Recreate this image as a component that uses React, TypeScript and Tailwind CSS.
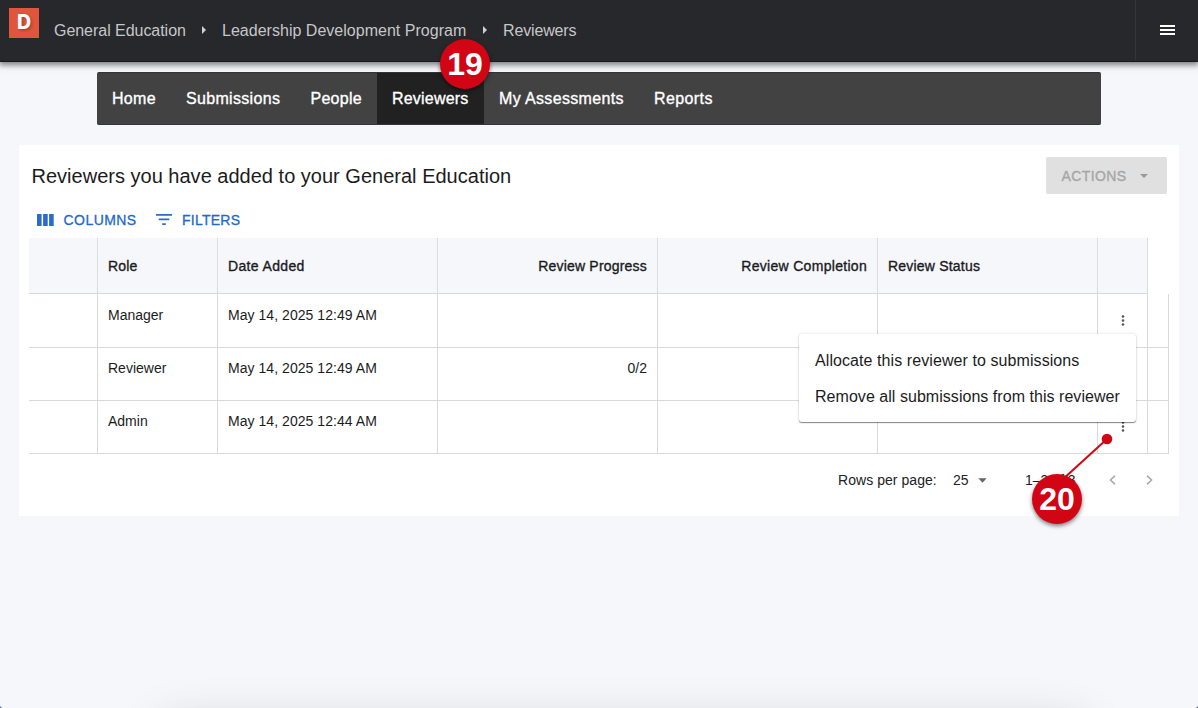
const navItems = [
  { label: 'Home', box: 'w-[74px]', text: 'tracking-[0.3px]' },
  { label: 'Submissions', box: 'w-[124.5px]', text: 'tracking-[0.32px]' },
  { label: 'People', box: 'w-[81.5px]', text: 'tracking-[0.27px]' },
  { label: 'Reviewers', box: 'w-[107px]', text: 'tracking-[0.2px]', active: true },
  { label: 'My Assessments', box: 'w-[155px]', text: 'tracking-[0.35px]' },
  { label: 'Reports', box: 'w-[89px]', text: 'tracking-[0.4px]' },
]

const rows = [
  { role: 'Manager', date: 'May 14, 2025 12:49 AM', progress: '' },
  { role: 'Reviewer', date: 'May 14, 2025 12:49 AM', progress: '0/2' },
  { role: 'Admin', date: 'May 14, 2025 12:44 AM', progress: '' },
]

const medium = '[-webkit-text-stroke:0.35px_currentColor]'

function Crumb({ label, className }: { label: string; className: string }) {
  return <span className={`whitespace-nowrap ${className}`}>{label}</span>
}

function CrumbArrow() {
  return (
    <svg className="-mt-px mr-4 ml-4 shrink-0" width="4" height="8" viewBox="0 0 4 8">
      <path d="M0 0L4 4L0 8Z" fill="#d0d0d1" />
    </svg>
  )
}

function Header() {
  return (
    <header className="relative flex h-[62px] shrink-0 border-b border-[#1a1820] bg-[#27282c] shadow-[0_2px_6px_1px_rgba(0,0,0,0.5)]">
      <div className="mt-2 ml-[9px] flex h-[30px] w-[30px] shrink-0 items-center justify-center overflow-hidden bg-[#e2553c]">
        <span className="font-['Inter',sans-serif] text-[19.5px] leading-none font-extrabold text-white [text-shadow:1px_1px_2px_#bd4834,2px_2px_2px_#bd4834]">
          D
        </span>
      </div>
      <nav className="ml-[15px] flex h-[60px] items-center pt-px text-base text-[#c6c6c8]">
        <Crumb label="General Education" className="w-[132px] tracking-[-0.04px]" />
        <CrumbArrow />
        <Crumb label="Leadership Development Program" className="w-[245px] tracking-[0.02px]" />
        <CrumbArrow />
        <Crumb label="Reviewers" className="tracking-[-0.15px]" />
      </nav>
      <div className="ml-auto flex h-[60px] w-[63px] items-center border-l border-[#34353a] pl-6">
        <div className="flex w-[15px] flex-col gap-[2px]">
          <span className="h-[2px] bg-white" />
          <span className="h-[2px] bg-white" />
          <span className="h-[2px] bg-white" />
        </div>
      </div>
    </header>
  )
}

function MainNav() {
  return (
    <nav className="mx-[97px] mt-[10px] flex h-[53px] w-[1004px] shrink-0 overflow-hidden rounded-[2px] border-y border-[#353535] bg-[#424242]">
      {navItems.map((item) => (
        <a
          key={item.label}
          className={`flex shrink-0 items-center pl-[15px] text-base whitespace-nowrap text-white ${medium} ${item.box} ${item.text} ${
            item.active ? 'bg-[#212121]' : ''
          }`}
        >
          {item.label}
        </a>
      ))}
    </nav>
  )
}

function Toolbar() {
  return (
    <div className="mt-2 mb-[2px] flex h-8 items-center pl-[18px] text-sm text-[#1f69c8]">
      <svg width="17" height="12" viewBox="0 0 17 12" fill="#2a6bcb">
        <path d="M0 0h4.6v12H0zM6.1 0h4.6v12H6.1zM12.1 0h4.6v12h-4.6z" />
      </svg>
      <span className="-mt-px ml-[9.5px] w-[92.5px] tracking-[0.45px] whitespace-nowrap [-webkit-text-stroke:0.3px_currentColor]">
        COLUMNS
      </span>
      <svg className="-mt-px" width="16" height="11" viewBox="0 0 16 11" fill="#2a6bcb">
        <path d="M0 0h16v1.7H0zM2.7 4.6h10.6v1.7H2.7zM6.2 9.2h3.6v1.7H6.2z" />
      </svg>
      <span className="-mt-px ml-[10px] tracking-[0.25px] whitespace-nowrap [-webkit-text-stroke:0.3px_currentColor]">
        FILTERS
      </span>
    </div>
  )
}

function MoreIcon() {
  return (
    <svg width="4" height="11" viewBox="0 0 4 11" fill="#555">
      <circle cx="2" cy="1.5" r="1.3" />
      <circle cx="2" cy="5.5" r="1.3" />
      <circle cx="2" cy="9.5" r="1.3" />
    </svg>
  )
}

function ReviewersTable() {
  const head = 'flex items-center border-r border-[#dcdddf] px-[10px]'
  const cell = 'border-r border-[#d9d9d9] px-[10px] leading-5 whitespace-nowrap'

  return (
    <div className="ml-[10px] text-sm text-[#1c1c1c]">
      <div
        className={`grid h-14 w-[1119px] grid-cols-[69px_120px_220px_220px_220px_220px_50px] border-b border-[#d9d9d9] bg-[#f5f7fb] tracking-[0.2px] ${medium}`}
      >
        <div className={head} />
        <div className={head}>Role</div>
        <div className={`${head} tracking-[0.35px]`}>Date Added</div>
        <div className={`${head} justify-end`}>Review Progress</div>
        <div className={`${head} justify-end tracking-[0.3px]`}>Review Completion</div>
        <div className={head}>Review Status</div>
        <div className={head} />
      </div>
      {rows.map((row, i) => (
        <div
          key={row.role}
          className={`grid w-[1140px] grid-cols-[69px_120px_220px_220px_220px_220px_50px_21px] border-b border-[#d9d9d9] *:pt-[10px] ${
            i === 0 ? 'h-[54px] *:pt-[11px]' : 'h-[53px]'
          }`}
        >
          <div className={cell} />
          <div className={cell}>{row.role}</div>
          <div className={`${cell} tracking-[0.05px]`}>{row.date}</div>
          <div className={`${cell} text-right`}>{row.progress}</div>
          <div className={cell} />
          <div className={cell} />
          <div className="flex justify-center border-r border-[#d9d9d9]">
            <div className="mt-[10px]">
              <MoreIcon />
            </div>
          </div>
          <div className="border-r border-[#d9d9d9]" />
        </div>
      ))}
    </div>
  )
}

function Pagination() {
  return (
    <div className="flex h-[51px] items-center pl-[819px] text-sm whitespace-nowrap text-[#222]">
      <span className="w-[115px] tracking-[0.05px]">Rows per page:</span>
      <span className="w-[25px]">25</span>
      <svg className="mt-px mr-[38px]" width="9" height="5" viewBox="0 0 9 5">
        <path d="M0.3 0.3H8.7L4.5 4.7Z" fill="#666" />
      </svg>
      <span className="w-[84px]">1–3 of 3</span>
      <svg width="7" height="10" viewBox="0 0 7 10" fill="none" stroke="#aaa" strokeWidth="1.6">
        <path d="M6 0.7L1.5 5L6 9.3" />
      </svg>
      <svg className="ml-[29.5px]" width="7" height="10" viewBox="0 0 7 10" fill="none" stroke="#aaa" strokeWidth="1.6">
        <path d="M1 0.7L5.5 5L1 9.3" />
      </svg>
    </div>
  )
}

function RowMenu() {
  return (
    <div className="absolute top-[334px] left-[799px] h-[88px] w-[337px] rounded-[3px] bg-white pt-[9px] pl-4 text-base text-[#1c1c1c] shadow-[0_1px_1px_rgba(0,0,0,0.45),0_0_3px_rgba(0,0,0,0.14)]">
      <div className="flex h-9 items-center tracking-[0.08px] whitespace-nowrap">Allocate this reviewer to submissions</div>
      <div className="flex h-9 items-center tracking-[0.04px] whitespace-nowrap">Remove all submissions from this reviewer</div>
    </div>
  )
}

function Marker({ value, className }: { value: string; className: string }) {
  return (
    <div
      className={`absolute flex h-[50px] w-[50px] items-center justify-center rounded-full bg-[#d20515] text-[32px] leading-none font-bold text-white shadow-[0_2px_4px_rgba(0,0,0,0.5)] ${className}`}
    >
      {value}
    </div>
  )
}

export default function App() {
  return (
    <div className="h-[708px] w-[1198px] bg-[#3f5580]">
      <div className="relative flex h-full flex-col overflow-hidden rounded-b-[3px] bg-[#f5f7fb] font-['Liberation_Sans',Arial,sans-serif]">
        <Header />
        <MainNav />

        <main className="mt-5 ml-[19px] h-[371px] w-[1160px] shrink-0 bg-white">
          <div className="flex h-[51px] items-start justify-between pt-3 pr-[12.5px] pl-[12.5px]">
            <h1 className="pt-[5px] text-xl leading-7 tracking-[0.01px] whitespace-nowrap text-[#1c1c1c]">
              Reviewers you have added to your General Education
            </h1>
            <button
              disabled
              className={`flex h-[37px] w-[121px] items-center rounded-[2px] bg-[#e0e0e0] pt-px pl-4 text-sm tracking-[0.4px] text-[#a6a6a6] ${medium}`}
            >
              <span className="w-[78.5px] text-left">ACTIONS</span>
              <svg width="8" height="4" viewBox="0 0 8 4">
                <path d="M0 0H8L4 4Z" fill="#999" />
              </svg>
            </button>
          </div>
          <Toolbar />
          <ReviewersTable />
          <Pagination />
        </main>

        <RowMenu />

        <svg className="absolute top-[430px] left-[1050px]" width="66" height="56" viewBox="0 0 66 56">
          <path d="M57 9L12 50" stroke="#d20515" strokeWidth="2" />
          <circle cx="57" cy="9" r="5.3" fill="#d20515" />
        </svg>
        <Marker value="19" className="top-[39px] left-[440px]" />
        <Marker value="20" className="top-[474px] left-[1032px]" />

        <div className="absolute top-[718px] left-[160px] h-10 w-[926px] shadow-[0_0_44px_0_rgba(0,0,0,0.13)]" />
      </div>
    </div>
  )
}
